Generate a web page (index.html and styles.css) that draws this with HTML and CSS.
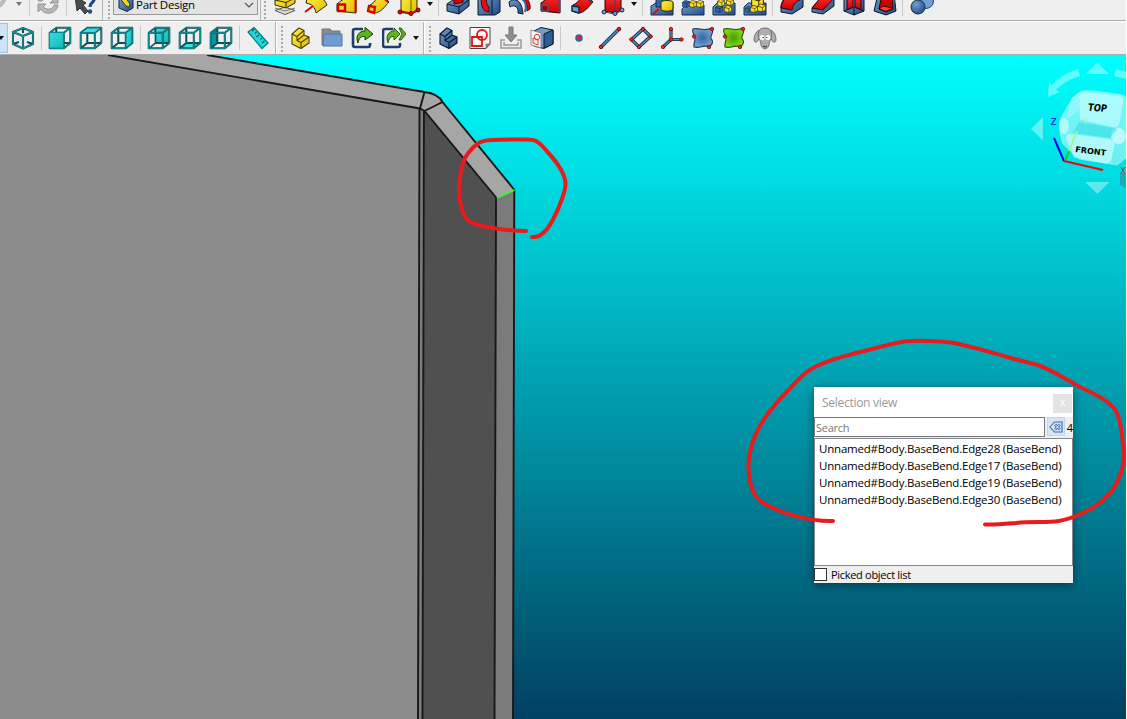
FILE: index.html
```
<!DOCTYPE html>
<html lang="en">
<head>
<meta charset="utf-8">
<title>Part Design</title>
<link rel="stylesheet" href="styles.css">
</head>
<body>
<svg class="defs" aria-hidden="true">
  <defs>
    <linearGradient id="teal" x1="0" y1="0" x2="1" y2="1"><stop offset="0" stop-color="#34e0e2"/><stop offset="1" stop-color="#14b5b8"/></linearGradient>
    <linearGradient id="blue" x1="0" y1="0" x2="1" y2="1"><stop offset="0" stop-color="#729fcf"/><stop offset="1" stop-color="#204a87"/></linearGradient>
    <linearGradient id="red" x1="0" y1="0" x2="0" y2="1"><stop offset="0" stop-color="#ff3030"/><stop offset="1" stop-color="#cc0000"/></linearGradient>
    <linearGradient id="yel" x1="0" y1="0" x2="1" y2="1"><stop offset="0" stop-color="#fff04a"/><stop offset="1" stop-color="#e0bb00"/></linearGradient>
    <radialGradient id="ball" cx=".35" cy=".3" r=".8"><stop offset="0" stop-color="#729fcf"/><stop offset="1" stop-color="#204a87"/></radialGradient>
    <radialGradient id="surf"><stop offset="0" stop-color="#34659f"/><stop offset="1" stop-color="#729fcf"/></radialGradient>
    <radialGradient id="surfg"><stop offset="0" stop-color="#4e9a06"/><stop offset="1" stop-color="#7ddb18"/></radialGradient>
    <symbol id="wire" viewBox="0 0 24 24">
      <path d="M1.7 6.8H15.8V22.3H1.7ZM8.3 1.8H22.3V17H8.3ZM1.7 6.8 8.3 1.8M15.8 6.8 22.3 1.8M15.8 22.3 22.3 17M1.7 22.3 8.3 17" fill="none" stroke="#0b5055" stroke-width="2" stroke-linejoin="round"/>
      <path d="M1.7 6.8H15.8V22.3H1.7ZM8.3 1.8H22.3V17M1.7 6.8 8.3 1.8M15.8 6.8 22.3 1.8M15.8 22.3 22.3 17" fill="none" stroke="#16a8ab" stroke-width=".8"/>
    </symbol>
    <symbol id="base" viewBox="0 0 24 24">
      <g stroke-width="1.1" stroke-linejoin="round"><path d="M3 8 10 2 15 4.500V9L20 11V17L12 22.500 3 18Z"/>
      <path d="M3 8 8 10.500 15 4.500M8 10.500V14.500L12 16.500 20 11M8 14.500 15 9M12 16.500V22" fill="none"/></g>
    </symbol>
    <symbol id="patch" viewBox="0 0 24 24"><path d="M2 3C7 1 13 6 21 2 24 7 17 11 21 14 23 18 19 20 18 21 13 18 9 23 3 21 2 17 6 13 3 9 2 7 1 5 2 3Z" stroke-width="1.1"/><g fill="#ef2929" stroke="#7d0000" stroke-width=".8"><circle cx="21" cy="3" r="1.7"/><circle cx="3" cy="10.500" r="1.700"/><circle cx="18" cy="21" r="1.7"/></g></symbol>
    <symbol id="yblock" viewBox="0 0 10 10"><path d="M.5 3 4 .5 9.500 2V7L6 9.500.5 8Z" stroke-width=".8"/><path d="M.5 3 6 4.500 9.500 2M6 4.500V9.500" fill="none" stroke-width=".8"/></symbol>
  </defs>
</svg>

<div class="app">
  <header class="toolbars">
    <div class="row row-top">
      <div class="bar bar-file">
        <svg class="ic" viewBox="0 0 24 24"><path d="M-2 20C5 19 10 10 12 2L5 5-3 14Z" fill="#bdbdbd" stroke="#999"/></svg>
        <i class="sep s1"></i>
        <svg class="ic refresh" viewBox="0 0 24 24"><path d="M2 10C3 4 17 1 19 7L22 5V12H14L17 9C12 6 7 7 6 10Z" fill="#b7b7b7" stroke="#929292"/><path d="M22 14C21 23 8 25 5 18L2 21V13H10L7 16C12 20 17 18 18 14Z" fill="#b7b7b7" stroke="#929292"/></svg>
        <i class="sep s2"></i>
        <svg class="ic whats" viewBox="0 0 24 24"><path d="M2 5 13 12 10 14 15 20 12 23 7 17 4 20Z" fill="#4b4b4b" stroke="#333"/><path d="M14 7C15 3 22 4 21 9 20 12 17 12 17 16" fill="none" stroke="#204a87" stroke-width="3.200"/><circle cx="17" cy="20.5" r="2.2" fill="#204a87"/></svg>
      </div>
      <div class="bar bar-bench"><i class="grip"></i>
        <div class="combo">
          <svg viewBox="0 0 16 16"><path d="M1 3 8 1 15 3V12L9 15.500 1 12Z" fill="url(#blue)" stroke="#102a50"/><path d="M1 1 6 0 12 8 11 11 8 10Z" fill="#f6d52b" stroke="#453600"/></svg>
          <span>Part Design</span>
          <svg class="chev" viewBox="0 0 10 6"><path d="M1 1 5 5 9 1" fill="none" stroke="#555" stroke-width="1.2"/></svg>
        </div>
      </div>
      <div class="bar bar-model"><i class="grip"></i>
        <svg class="ic" viewBox="0 0 24 24"><path d="M2 18.500 12 15 22 18.500 12 22.500Z" fill="#ddd" stroke="#555"/><path d="M2 16 12 19 22 16" fill="none" stroke="#777"/><path d="M2 5 12 2 22 5V11L13 16 2 13Z" fill="url(#yel)" stroke="#302b00"/><path d="M2 8 13 10.500 22 6M13 10V16" fill="none" stroke="#302b00"/></svg>
        <svg class="ic" viewBox="0 0 24 24"><path d="M3 6C10 0 20 5 23 13L12 21C11 15 8 12 2 11Z" fill="url(#yel)" stroke="#302b00"/><path d="M1 20 9 14" stroke="#d00" stroke-width="2"/></svg>
        <svg class="ic" viewBox="0 0 24 24"><path d="M11 5 21 2V21L2 19V12Z" fill="url(#yel)" stroke="#302b00"/><path d="M3 12.500H10V19H3Z" fill="#f2d51a" stroke="#d00000" stroke-width="2.400"/><path d="M20.500 3V20.500" stroke="#d00000" stroke-width="2"/></svg>
        <svg class="ic" viewBox="0 0 24 24"><path d="M4 13C10 10 11 4 14 1L23 10C19 14 15 21 8 21L2 19Z" fill="url(#yel)" stroke="#302b00"/><path d="M3 14 9 15 8 21 2 19ZM15 3 22 10" fill="none" stroke="#d00" stroke-width="2.400"/></svg>
        <svg class="ic" viewBox="0 0 24 24"><path d="M4 3 20 2V18L14 21 4 19Z" fill="url(#yel)" stroke="#302b00"/><path d="M3 20 14 22 22 18" fill="none" stroke="#a01000" stroke-width="1.600"/><path d="M14 4V22" fill="none" stroke="#805000"/><g fill="#e00" stroke="#600"><circle cx="3" cy="20" r="2"/><circle cx="14" cy="21.500" r="2"/><circle cx="21" cy="18" r="2"/></g></svg>
        <i class="arrow"></i><i class="sep"></i>
        <svg class="ic" viewBox="0 0 24 24"><path d="M1 12 10 6 23 8V14L13 22 1 19Z" fill="url(#blue)" stroke="#0b1521"/><path d="M1 12 13 15 23 8M13 15V22" fill="none" stroke="#0b1521"/><path d="M8 6 17 7V10L8 12Z" fill="#d00" stroke="#400"/></svg>
        <svg class="ic" viewBox="0 0 24 24"><path d="M1 5H17L23 2V20L18 23H1Z" fill="url(#blue)" stroke="#0b1521"/><path d="M15 7V22" stroke="#0b1521"/><path d="M4 3C4 16 6 19 12 20V15C9 13 9 7 10 3Z" fill="#e01010" stroke="#500"/></svg>
        <svg class="ic" viewBox="0 0 24 24"><path d="M1 10C7 5 14 8 15 22L10 21C11 15 6 12 2 15Z" fill="url(#blue)" stroke="#0b1521"/><path d="M9 6C16 6 20 12 19 19L22 17C23 11 19 5 14 3Z" fill="#d00" stroke="#500"/><path d="M12 6C17 8 19 13 17 20" fill="none" stroke="#3465a4" stroke-width="2"/></svg>
        <svg class="ic" viewBox="0 0 24 24"><path d="M10 5 21 2V21L2 19V11Z" fill="url(#red)" stroke="#300"/><path d="M3 13 9 13.500V19.500L3 19Z" fill="#a00000" stroke="#3d5f90" stroke-width="1.300"/><path d="M20.500 3V20.500" stroke="#38527a" stroke-width="1.800"/></svg>
        <svg class="ic" viewBox="0 0 24 24"><path d="M3 13C10 10 11 4 14 1L23 10C19 14 15 21 8 21L2 19Z" fill="url(#red)" stroke="#300"/><path d="M2 14 9 15V21L2 19Z" fill="#729fcf" stroke="#102a50" stroke-width="1.500"/><path d="M15 3 22 10" stroke="#243e67" stroke-width="2.200"/></svg>
        <svg class="ic" viewBox="0 0 24 24"><path d="M4 3H20V18L14 21 4 19Z" fill="url(#red)" stroke="#300"/><path d="M3 20 14 22 22 18M14 4V22" fill="none" stroke="#204a87"/><g fill="#729fcf" stroke="#102a50"><circle cx="3" cy="20" r="2"/><circle cx="14" cy="21.500" r="2"/><circle cx="21" cy="18" r="2"/></g></svg>
        <i class="arrow"></i><i class="sep"></i>
        <svg class="ic" viewBox="0 0 24 24"><path d="M1 14 6 11H23V23H1Z" fill="url(#blue)" stroke="#102a50"/><path d="M6 2H13V15H6Z" fill="#3465a4" stroke="#102a50"/><path d="M11 10V17C12 20 22 20 23 17V10C22 8 12 8 11 10" fill="url(#yel)" stroke="#302b00"/><path d="M3 22 9 17" stroke="#e00" stroke-width="1.800"/></svg>
        <svg class="ic" viewBox="0 0 24 24"><path d="M1 17 5 13H23V23H1Z" fill="url(#blue)" stroke="#102a50"/><use href="#yblock" x="1" y="8" width="8" height="8" fill="#3465a4" stroke="#102a50"/><g fill="#fce02b" stroke="#302b00"><use href="#yblock" x="8" y="8" width="8" height="8"/><use href="#yblock" x="15" y="8" width="8" height="8"/></g></svg>
        <svg class="ic" viewBox="0 0 24 24"><path d="M1 15 5 11H23V23H1Z" fill="url(#blue)" stroke="#102a50"/><use href="#yblock" x="3" y="13" width="8" height="8" fill="#3465a4" stroke="#102a50"/><g fill="#fce02b" stroke="#302b00"><use href="#yblock" x="5" y="7" width="8" height="8"/><use href="#yblock" x="14" y="6" width="8" height="8"/><use href="#yblock" x="12" y="13" width="8" height="8"/></g></svg>
        <svg class="ic" viewBox="0 0 24 24"><path d="M1 15 5 11H23V23H1Z" fill="url(#blue)" stroke="#102a50"/><use href="#yblock" x="2" y="14" width="7" height="7" fill="#3465a4" stroke="#102a50"/><g fill="#fce02b" stroke="#302b00"><use href="#yblock" x="8" y="3" width="13" height="13"/><use href="#yblock" x="14" y="11" width="9" height="10"/><use href="#yblock" x="7" y="13" width="8" height="8"/></g></svg>
        <i class="sep"></i>
        <svg class="ic" viewBox="0 0 24 24"><path d="M1 14C2 8 6 4 10 3L23 7V15L12 22 1 20Z" fill="url(#blue)" stroke="#0b1521"/><path d="M1 16C2 9 6 4 10 3L23 7C17 8 13 12 12 18Z" fill="url(#red)" stroke="#300"/></svg>
        <svg class="ic" viewBox="0 0 24 24"><path d="M1 16 12 3 23 7V14L12 22 1 20Z" fill="url(#blue)" stroke="#0b1521"/><path d="M1 16 12 3 22 7 12 18Z" fill="url(#red)" stroke="#300"/></svg>
        <svg class="ic" viewBox="0 0 24 24"><path d="M2 3 12 5 22 3V19L12 23 2 19Z" fill="url(#blue)" stroke="#0b1521"/><path d="M5 4 11 5V15L5 18ZM13 5 19 4V18L13 15Z" fill="url(#red)" stroke="#300"/><path d="M12 16V23M2 19 12 15 22 19" stroke="#0b1521" fill="none"/></svg>
        <svg class="ic" viewBox="0 0 24 24"><path d="M5 2H21L23 19 13 23 1 19Z" fill="url(#blue)" stroke="#0b1521"/><path d="M9 2H19L20 17 13 20 6 17Z" fill="#c80000" stroke="#300"/><path d="M6 17 10 14 20 16 13 19.500Z" fill="#ff3a3a" stroke="#300"/></svg>
        <i class="sep"></i>
        <svg class="ic" viewBox="0 0 24 24"><circle cx="16" cy="9" r="7.500" fill="#729fcf" stroke="#204a87"/><circle cx="8" cy="15" r="7" fill="url(#ball)" stroke="#102a50"/></svg>
      </div>
    </div>

    <div class="row row-view">
      <div class="bar bar-views">
        <div class="pressed"><i class="arrow"></i></div>
        <svg class="ic" viewBox="0 0 24 24"><g fill="none" stroke-linejoin="round"><path d="M2 6 12 2 22 6V18L12 22.500 2 18ZM2 6 12 10 22 6M12 10V22M12 2V7M2 18 8 16M22 18 16 16" stroke="#0b5055" stroke-width="2.100"/><path d="M2 6 12 2 22 6V18L12 22.500 2 18ZM2 6 12 10 22 6M12 10V22" stroke="#22b4b6" stroke-width=".8"/></g></svg>
        <i class="sep"></i>
        <svg class="ic" viewBox="0 0 24 24"><use href="#wire"/><path d="M1.500 6.500H15.500V22H1.500Z" fill="url(#teal)" stroke="#0c8a8e"/></svg>
        <svg class="ic" viewBox="0 0 24 24"><use href="#wire"/><path d="M2 6.800 8.500 2H22L15.500 6.800Z" fill="#34e0e2" stroke="#0b6a70"/></svg>
        <svg class="ic" viewBox="0 0 24 24"><use href="#wire"/><path d="M16 7 22 2.500V17L16 22Z" fill="url(#teal)" stroke="#0b6a70"/></svg>
        <i class="sep"></i>
        <svg class="ic" viewBox="0 0 24 24"><path d="M8.500 2H22V17H8.500Z" fill="url(#teal)"/><use href="#wire"/><path d="M3 8H8V16.500L3 21Z" fill="#efefef" opacity=".6"/></svg>
        <svg class="ic" viewBox="0 0 24 24"><path d="M2 22 8.500 17H22L15.500 22Z" fill="#34e0e2"/><use href="#wire"/></svg>
        <svg class="ic" viewBox="0 0 24 24"><path d="M2 7 8.500 2V17L2 22Z" fill="#06989a"/><use href="#wire"/></svg>
        <i class="sep"></i>
        <svg class="ic" viewBox="0 0 24 24"><path d="M2 6 8 1.500 22 17 16 22.500Z" fill="#22d5d8" stroke="#087f83" stroke-width="1.200" stroke-linejoin="round"/><path d="M8 3 6 5M10.500 6 9 7.500M13 9 10.500 11M16 12 14.500 13.500M18.500 15 16 17" stroke="#055b5f" stroke-width="1.100"/></svg>
      </div>
      <div class="bar bar-struct"><i class="grip"></i>
        <svg class="ic" viewBox="0 0 24 24" fill="url(#yel)" stroke="#4a4100"><use href="#base"/></svg>
        <svg class="ic" viewBox="0 0 24 24"><path d="M2 3H10L12 5H20V19H2Z" fill="#8a8a8a" stroke="#777"/><path d="M4 8H22V20H3Z" fill="#6f9bd0" stroke="#4a77ae"/></svg>
        <svg class="ic" viewBox="0 0 24 24"><path d="M12 3H4Q2 3 2 5V19Q2 21 4 21H17Q19 21 19 19V17" fill="none" stroke="#1f3f6b" stroke-width="2.600"/><path d="M7 17C4 10 8 5 14 5V1.500L22 8 14 14V10.500C10 10 8 12 7 17Z" fill="#58b815" stroke="#173604"/></svg>
        <svg class="ic" viewBox="0 0 24 24"><path d="M11 3H3Q1 3 1 5V19Q1 21 3 21H16Q18 21 18 19V17" fill="none" stroke="#1f3f6b" stroke-width="2.600"/><path d="M6 17C3 10 7 5 12 5V2L18 8 12 14V10.500C9 10 7 12 6 17ZM17 2 19 2 24 8 19 14H17L20 8Z" fill="#58b815" stroke="#173604" stroke-width=".8"/></svg>
        <i class="arrow"></i>
      </div>
      <div class="bar bar-help"><i class="grip"></i>
        <svg class="ic" viewBox="0 0 24 24" fill="url(#blue)" stroke="#0b1521"><use href="#base"/></svg>
        <svg class="ic" viewBox="0 0 24 24"><path d="M2 1.500H22V18L18 22.500H2Z" fill="#fafafa" stroke="#444"/><path d="M18 22V18H22Z" fill="#999" stroke="#444" stroke-width=".6"/><path d="M4 11H14V20H4Z" fill="none" stroke="#e01515" stroke-width="1.800"/><circle cx="14" cy="9" r="5" fill="none" stroke="#e01515" stroke-width="1.800"/></svg>
        <svg class="ic" viewBox="0 0 24 24"><path d="M6 14H2V22H22V14H18M5 16V19H19V16" fill="none" stroke="#999" stroke-width="1.500"/><path d="M10 1H14V9H18L12 16 6 9H10Z" fill="#8d8d8d" stroke="#777"/></svg>
        <svg class="ic" viewBox="0 0 24 24"><path d="M4 5 11 1.500 23 4V18L14 22.500 4 20Z" fill="#729fcf" stroke="#0b1521"/><path d="M14 8 23 4V18L14 22Z" fill="#2d5c9a" stroke="#0b1521"/><path d="M1 4 11 7V22L1 19Z" fill="#f5f5f5" stroke="#777" stroke-width=".8"/><path d="M3 12 8 14V19L3 17Z" fill="none" stroke="#e33"/><circle cx="7" cy="11" r="2.700" fill="none" stroke="#e33"/></svg>
        <i class="sep"></i>
        <svg class="ic" viewBox="0 0 24 24"><circle cx="12" cy="12" r="3" fill="#d3262c" stroke="#3465a4" stroke-width="1.600"/></svg>
        <svg class="ic" viewBox="0 0 24 24"><path d="M3 21 21 3" stroke="#162c49" stroke-width="3.600"/><path d="M3 21 21 3" stroke="#4f80b8" stroke-width="1.800"/><g fill="#ef2929" stroke="#7d0000"><circle cx="3" cy="21" r="1.700"/><circle cx="21" cy="3" r="1.700"/></g></svg>
        <svg class="ic" viewBox="0 0 24 24"><g fill="none"><path d="M14 3 21.500 10.500 10 21 2.500 13.500Z" stroke="#162c49" stroke-width="3.400"/><path d="M14 3 21.500 10.500 10 21 2.500 13.500Z" stroke="#5b8abd" stroke-width="1.600"/></g><g fill="#ef2929" stroke="#7d0000" stroke-width=".8"><circle cx="14" cy="3" r="1.700"/><circle cx="21.500" cy="10.500" r="1.700"/><circle cx="10" cy="21" r="1.700"/><circle cx="2.500" cy="13.500" r="1.700"/></g></svg>
        <svg class="ic" viewBox="0 0 24 24"><g fill="none"><path d="M11 3V13.500H21.500M11 13.500 3 21" stroke="#162c49" stroke-width="3.200"/><path d="M11 3V13.500H21.500M11 13.500 3 21" stroke="#5b8abd" stroke-width="1.400"/></g><g fill="#ef2929" stroke="#7d0000" stroke-width=".8"><circle cx="11" cy="3" r="1.700"/><circle cx="21.500" cy="13.500" r="1.700"/><circle cx="3" cy="21" r="1.700"/><circle cx="11" cy="13.500" r="1.700"/></g></svg>
        <svg class="ic" viewBox="0 0 24 24" fill="url(#surf)" stroke="#1c3556"><use href="#patch"/></svg>
        <svg class="ic" viewBox="0 0 24 24" fill="url(#surfg)" stroke="#274f05"><use href="#patch"/></svg>
        <svg class="ic" viewBox="0 0 24 24"><g fill="#aeaeae" stroke="#727272"><path d="M6 4C1 7 0 15 2 16 5 17 6 12 7 9ZM18 4C23 7 24 15 22 16 19 17 18 12 17 9Z"/><path d="M6 5C7 1 17 1 18 5 20 11 16 15 16 19 15 24 9 24 8 19 8 15 4 11 6 5Z"/></g><circle cx="9" cy="11.500" r="2.500" fill="#fff"/><circle cx="15" cy="11.500" r="2.500" fill="#fff"/><path d="M9.500 11.500H11M13 11.500H14.500M10 20 12 21 14 20" stroke="#444" stroke-width="1.200" fill="none"/></svg>
      </div>
    </div>
  </header>

  <main class="viewport">
    <svg class="scene" viewBox="0 55 1126 664">
      <path d="M0 55H108L420 108V719H0Z" fill="#8c8c8c"/>
      <path d="M108 55H207L424.500 92C433 93 440 97 442.500 102L514.500 190 497 198 424.500 111 420 108.500Z" fill="#a6a6a6"/>
      <path d="M420 108 424.500 111 423 719H418Z" fill="#7b7b7b"/>
      <path d="M424.500 111 496.500 198 494.500 719H423Z" fill="#505050"/>
      <path d="M496.500 198 514.500 190 513 719H494.500Z" fill="#7b7b7b"/>
      <g fill="none" stroke="#181818" stroke-width="1.900">
        <path d="M108 55 420 108.500 424.500 111 496.500 198M207 55 424.500 92C433 93 440 97 442.500 102L514.500 190M424.500 92 420 108.500M424.500 111 442.500 102"/>
        <path d="M419.500 108 418 719M424 111 422.500 719M496 198 494.500 719M514.300 190 513 719"/>
      </g>
      <path d="M497 198 514.500 190" stroke="#2dff2d" stroke-width="1.900"/>
      <g fill="#dfffff" fill-opacity=".42">
        <path d="M1086 74 1097.500 62.500 1109 74ZM1031 129 1043 117V140.500ZM1085 182H1109.500L1097.500 194Z"/>
        <path d="M1078 69 1080 76C1070 79 1062 84 1056 90L1060 92 1048 97 1049 82 1052 85C1059 77 1068 72 1078 69ZM1116 69 1126 72V79L1114 76Z"/>
        <path d="M1120 173H1126V188L1120 185Z" fill="#1d9eb0" fill-opacity=".8"/>
      </g>
      <g fill="#e5ffff" stroke="#bafafa" stroke-opacity=".55">
        <path d="M1080 92C1083 90 1092 90 1122 95L1126 97V158L1117 165 1079 159 1063 144C1059 134 1059 124 1061 118L1072 99Z" fill-opacity=".48"/>
        <path d="M1080 94Q1080 91 1085 92L1118 96Q1124 97 1123 101L1119 124Q1118 127 1114 127L1083 120Q1080 120 1080 116Z" fill-opacity=".52"/>
        <path d="M1068 134 1107 139Q1114 140 1114 145L1111 160Q1110 163 1105 163L1074 157 1066 138Z" fill-opacity=".56"/>
        <path d="M1072 98 1079 93V110L1068 118Z" fill-opacity=".25"/>
        <ellipse cx="1064" cy="126" rx="4.500" ry="8" fill-opacity=".55"/><ellipse cx="1118.500" cy="136" rx="7" ry="8" fill-opacity=".65"/>
      </g>
      <path d="M1079 122 1108 127 1118 129 1110 138 1073 133Z" fill="#00c8d4" fill-opacity=".3"/>
      <text class="cube-label" transform="translate(1087.500 110.500) rotate(4) skewX(-6)" textLength="19" lengthAdjust="spacingAndGlyphs">TOP</text>
      <text class="cube-label small" transform="translate(1075 152) rotate(7)" textLength="31" lengthAdjust="spacingAndGlyphs">FRONT</text>
      <g fill="none" stroke-width="2"><path d="M1054 138 1064 161" stroke="#0000f5"/><path d="M1064 161 1103 170" stroke="#f50000"/><path d="M1065 160 1069 151" stroke="#00d900"/><path d="M1069 151 1077 131" stroke="#a6f58f"/></g>
      <text class="axis" x="1050.500" y="125" fill="#0010e8">Z</text>
      <text class="axis" x="1082" y="124" fill="#aff5a2">Y</text>
      <text class="axis" x="1120" y="174" fill="#b02a30">X</text>
    </svg>

    <section class="panel">
      <div class="panel-title"><span>Selection view</span><button class="close">x</button></div>
      <div class="search-row">
        <div class="search">Search</div>
        <div class="clear"><svg viewBox="0 0 14 12"><path d="M1 6 5.500 1H13V11H5.500Z" fill="#d7e7fa" stroke="#47699c" stroke-width="1.100"/><path d="M6 3.500 11 8.500M11 3.500 6 8.500" stroke="#3c6eaf" stroke-width="2.600"/><path d="M6 3.500 11 8.500M11 3.500 6 8.500" stroke="#fff" stroke-width="1"/></svg></div>
        <span class="count">4</span>
      </div>
      <ul class="list">
        <li>Unnamed#Body.BaseBend.Edge28 (BaseBend)</li>
        <li>Unnamed#Body.BaseBend.Edge17 (BaseBend)</li>
        <li>Unnamed#Body.BaseBend.Edge19 (BaseBend)</li>
        <li>Unnamed#Body.BaseBend.Edge30 (BaseBend)</li>
      </ul>
      <div class="picked"><i class="check"></i><span>Picked object list</span></div>
    </section>

    <svg class="marks" viewBox="0 55 1126 664">
      <g fill="none" stroke="#e81c1c" stroke-width="4" stroke-linecap="round" stroke-linejoin="round">
        <path d="M526 231C506 231 484 227 472 223C463 220 459 202 459 190C459 178 462 164 465 158C469 151 477 142 484 141C490 139 512 139.500 526 139.500C535 139.500 538 141 544 148C552 157 560 165 564 176C567 184 565 190 562 199C557 213 549 229 543 233C539 237 536 237 532 237"/>
        <path d="M833 521C814 522 780 514 762 502C752 497 748 478 748.500 465C749 448 754 433 767 415C778 400 791 387 802 376C814 364 835 359 856 353C876 348 890 344 904 341.500C919 340 937 341 951 342.500C967 345 990 352 1007 357L1038 365C1050 369 1065 379 1078 386C1092 393 1108 399 1116 411C1122 422 1122 439 1124 454C1124 468 1118 486 1107 496C1097 507 1076 518 1059 521C1046 523 1032 521 1016 523C1004 524 994 525 985 524.500"/>
      </g>
    </svg>
  </main>
</div>
</body>
</html>
```
FILE: styles.css
```
* { box-sizing: border-box; }
body {
  margin: 0;
  background: #fff;
  color: #000;
  font: 12px/17px "Open Sans", "Noto Sans", sans-serif;
  overflow: hidden;
}
.defs { position: absolute; width: 0; height: 0; }
.app { width: 1126px; height: 719px; display: flex; flex-direction: column; overflow: hidden; }
.toolbars { flex: none; background: #efefef; }
.row { display: flex; overflow: hidden; }
.row-top { height: 21px; border-bottom: 1px solid #acacac; }
.row-view { height: 34px; border-top: 1px solid #fff; border-bottom: 1px solid #acacac; }
.bar { display: flex; flex: none; }
.row-view .bar { align-items: center; height: 32px; border-right: 1px solid #b5b5b5; box-shadow: 1px 0 #fff; }
.row-view .bar-help { flex: 1; border: 0; box-shadow: none; }
.row-top .bar { height: 20px; align-items: flex-end; }
.ic { width: 24px; height: 24px; margin: 0 3px 0 4px; flex: none; }
.row-view .ic { margin: 0 4px 0 3px; }
.row-top .ic { margin-bottom: 4px; }
.sep { width: 6px; height: 24px; flex: none; background: linear-gradient(#c9c9c9, #c9c9c9) 2px 0 / 1px 100% no-repeat; }
.row-top .sep { margin-bottom: 4px; }
.grip { width: 9px; height: 27px; flex: none; background: radial-gradient(circle, #aaa 1px, transparent 1.3px) 3px 0 / 4px 4px repeat-y; }
.row-top .grip { height: 20px; }
.arrow { width: 12px; height: 24px; flex: none; display: flex; align-items: center; justify-content: center; }
.arrow::before { content: ""; border: 3.5px solid transparent; border-top: 4px solid #111; border-bottom: 0; }
.row-top .arrow { height: 32px; }

.bar-file { width: 103px; border-right: 1px solid #b5b5b5; }
.row-top .bar-file .ic { margin: 0 0 5px; }
.bar-file .ic:first-child { width: 13px; }
.bar-file .s1 { width: 23px; background-position: 16px 0; position: relative; }
.bar-file .s1::before { content: ""; position: absolute; left: 3px; top: 10px; border: 3.5px solid transparent; border-top: 4px solid #777; border-bottom: 0; }
.bar-file .s2 { width: 13px; background-position: 6px 0; }
.bar-bench { width: 158px; border-right: 1px solid #b5b5b5; padding-left: 1px; }
.combo { width: 145px; height: 21px; margin-bottom: 5px; border: 1px solid #999; background: #e3e3e3; display: flex; align-items: center; font-size: 11.5px; letter-spacing: -.25px; }
.combo svg { width: 16px; height: 16px; margin: 0 2px 2px 4px; }
.combo span { flex: 1; white-space: nowrap; line-height: 9px; }
.combo .chev { width: 10px; height: 6px; margin: 0 3px 0 0; }
.bar-model .grip { width: 8px; background-position-x: 2px; }

.bar-views { width: 276px; }
.pressed { width: 8px; height: 30px; background: #cce4f7; border: 1px solid #90c8f6; border-left: 0; overflow: hidden; display: flex; align-items: center; justify-content: flex-end; }
.bar-struct { width: 148px; padding-left: 1px; }
.bar-help { padding-left: 1px; }

.viewport { position: relative; height: 664px; background: linear-gradient(#00ffff, #004060); }
.scene, .marks { position: absolute; left: 0; top: 0; width: 1126px; height: 664px; }
.marks { pointer-events: none; }
.cube-label { font: bold 10px "DejaVu Sans", sans-serif; }
.cube-label.small { font-size: 8px; }
.axis { font: 9px "DejaVu Sans", sans-serif; }

.panel { position: absolute; left: 814px; top: 332px; width: 259px; height: 196px; background: #efefef; box-shadow: 0 2px 9px rgba(0, 20, 30, .55); display: flex; flex-direction: column; overflow: hidden; }
.panel-title { height: 30px; background: #fff; display: flex; align-items: center; justify-content: space-between; padding: 0 1px 0 8px; color: #999; letter-spacing: -.28px; }
.close { width: 19px; height: 19px; margin-top: 3px; padding: 0 0 2px; border: 0; background: #e3e3e3; color: #fff; font: 10px/17px "Open Sans", sans-serif; }
.search-row { height: 20px; display: flex; align-items: stretch; background: #efefef; }
.search { width: 231px; border: 1px solid #7a7a7a; background: #fff; color: #777; padding: 1px 1px; font-size: 11px; letter-spacing: -.25px; line-height: 18px; }
.clear { width: 18px; height: 19px; margin-left: 2px; border: 1px solid #b8d9f3; background: #d5e5f3; display: flex; align-items: center; justify-content: center; }
.clear svg { width: 14px; height: 12px; }
.count { margin-left: 2px; font-size: 11px; line-height: 21px; white-space: nowrap; }
.list { height: 128px; margin: 1px 0 0; padding: 1px 4px; list-style: none; background: #fff; border: 1px solid #828790; white-space: nowrap; }
.list li { height: 17px; font-size: 11.5px; letter-spacing: -.2px; }
.picked { height: 17px; display: flex; align-items: center; gap: 4px; font-size: 11px; letter-spacing: -.3px; white-space: nowrap; }
.check { width: 13px; height: 13px; border: 1px solid #333; background: #fff; }
```
